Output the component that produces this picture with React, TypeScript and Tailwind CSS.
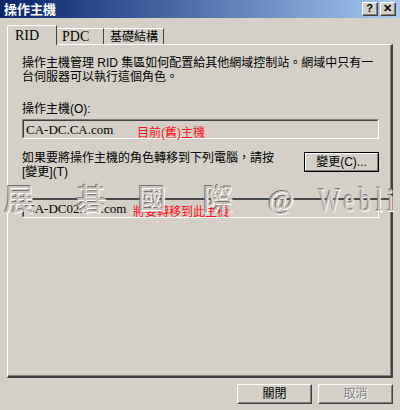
import React from "react";

const ui = { fontFamily: '"Liberation Sans", "Noto Sans CJK TC", sans-serif' };
const serif = { fontFamily: '"Liberation Serif", "Noto Sans CJK TC", serif' };

// Classic raised button: white top-left, dark bottom-right.
function Button({ label, disabled, strong }: { label: string; disabled?: boolean; strong?: boolean }) {
  return (
    <div
      className={
        "flex h-[20px] w-[75px] items-center justify-center text-[12px] " +
        (strong ? "border border-black" : "border-t border-l border-white border-r border-b border-r-[#404040] border-b-[#404040]")
      }
      style={ui}
    >
      <div
        className={
          "flex h-full w-full items-center justify-center border-t border-l border-r border-b " +
          (strong
            ? "border-t-white border-l-white border-r-[#808080] border-b-[#808080]"
            : "border-t-[#d4d0c8] border-l-[#d4d0c8] border-r-[#808080] border-b-[#808080]")
        }
      >
        <span className={disabled ? "text-[#808080] [text-shadow:1px_1px_0_#fff]" : "text-black"}>{label}</span>
      </div>
    </div>
  );
}

// Sunken read-only field with a red note written over it.
function Field({ value, note, noteLeft }: { value: string; note: string; noteLeft: string }) {
  return (
    <div className="h-[20px] w-[357px] border-t border-l border-t-[#808080] border-l-[#808080] border-r border-b border-r-white border-b-white">
      <div className="relative flex h-full items-center border-t border-l border-t-[#404040] border-l-[#404040] border-r border-b border-r-[#d4d0c8] border-b-[#d4d0c8] pl-[2px]">
        <span className="text-[13px] leading-none text-black" style={serif}>
          {value}
        </span>
        <span className={"absolute top-[6px] text-[12px] leading-none text-[#ff1020] " + noteLeft} style={ui}>
          {note}
        </span>
      </div>
    </div>
  );
}

function Watermark() {
  const glyph =
    "absolute text-[#c8c4bc] [text-shadow:1px_1px_0_#ffffff,-1px_-1px_0_#77746f] leading-none";
  return (
    <div className="pointer-events-none absolute inset-0">
      <div className="absolute left-[22px] top-[198px] h-[2px] w-[370px] bg-[#4a4a4a]" />
      <span className={glyph + " left-[4px] top-[185px] text-[30px]"} style={ui}>展</span>
      <span className={glyph + " left-[76px] top-[185px] text-[30px]"} style={ui}>碁</span>
      <span className={glyph + " left-[138px] top-[186px] text-[28px]"} style={ui}>國</span>
      <span className={glyph + " left-[203px] top-[185px] text-[30px]"} style={ui}>際</span>
      <span className={glyph + " left-[268px] top-[186px] text-[28px]"} style={serif}>@</span>
      <span
        className={glyph + " left-[318px] top-[183px] origin-left scale-x-[0.7] text-[34px] tracking-[7px]"}
        style={serif}
      >
        Webli
      </span>
    </div>
  );
}

export default function App() {
  return (
    <div className="relative h-[410px] w-[400px] overflow-hidden bg-[#d4d0c8] text-black" style={ui}>
      {/* title bar */}
      <div className="flex h-[18px] items-center justify-between bg-gradient-to-r from-[#0a246a] to-[#a6caf0] pl-[4px] pr-[4px]">
        <span className="text-[13px] font-bold leading-none text-white">操作主機</span>
        <div className="flex gap-[2px]">
          {["?", "✕"].map((c) => (
            <div
              key={c}
              className="h-[14px] w-[16px] border-t border-l border-white border-r border-b border-r-[#404040] border-b-[#404040] bg-[#d4d0c8]"
            >
              <div className="flex h-full w-full items-center justify-center border-r border-b border-r-[#808080] border-b-[#808080] text-[11px] font-bold leading-none">
                {c}
              </div>
            </div>
          ))}
        </div>
      </div>

      {/* tabs */}
      <div className="mt-[7px] flex h-[19px] items-end pl-[7px]">
        <div className="relative z-10 -mb-px flex h-[20px] w-[50px] items-center rounded-tl-[2px] border-t border-l border-white border-r border-r-[#404040] bg-[#d4d0c8] pl-[7px] text-[14px]" style={serif}>
          RID
        </div>
        <div className="flex h-[16px] w-[47px] items-center border-t border-white border-r border-r-[#404040] pl-[5px] text-[14px]" style={serif}>
          PDC
        </div>
        <div className="flex h-[16px] w-[60px] items-center border-t border-white border-r border-r-[#404040] pl-[6px] text-[12px]">
          基礎結構
        </div>
      </div>

      {/* panel */}
      <div className="ml-[7px] h-[334px] w-[386px] border-t border-l border-white border-r-2 border-b-2 border-r-[#404040] border-b-[#404040]">
        <div className="h-full w-full border-r border-b border-r-[#808080] border-b-[#808080] pl-[14px] pt-[11px]">
          <p className="text-[12px] leading-[14px]">
            操作主機管理 RID 集區如何配置給其他網域控制站。網域中只有一
            <br />
            台伺服器可以執行這個角色。
          </p>

          <p className="mt-[18px] text-[12px] leading-[14px]">操作主機(O):</p>
          <div className="mt-[3px]">
            <Field value="CA-DC.CA.com" note="目前(舊)主機" noteLeft="left-[113px]" />
          </div>

          <div className="mt-[12px] flex w-[357px] items-start justify-between">
            <p className="text-[12px] leading-[14px]">
              如果要將操作主機的角色轉移到下列電腦，請按
              <br />
              [變更](T)
            </p>
            <div className="mt-[1px]">
              <Button label="變更(C)..." strong />
            </div>
          </div>

          <div className="mt-[19px]">
            <Field value="CA-DC02.CA.com" note="將要轉移到此主機" noteLeft="left-[109px]" />
          </div>
        </div>
      </div>

      {/* footer buttons */}
      <div className="mt-[6px] flex justify-end gap-[6px] pr-[7px]">
        <Button label="關閉" />
        <Button label="取消" disabled />
      </div>

      <Watermark />
    </div>
  );
}
